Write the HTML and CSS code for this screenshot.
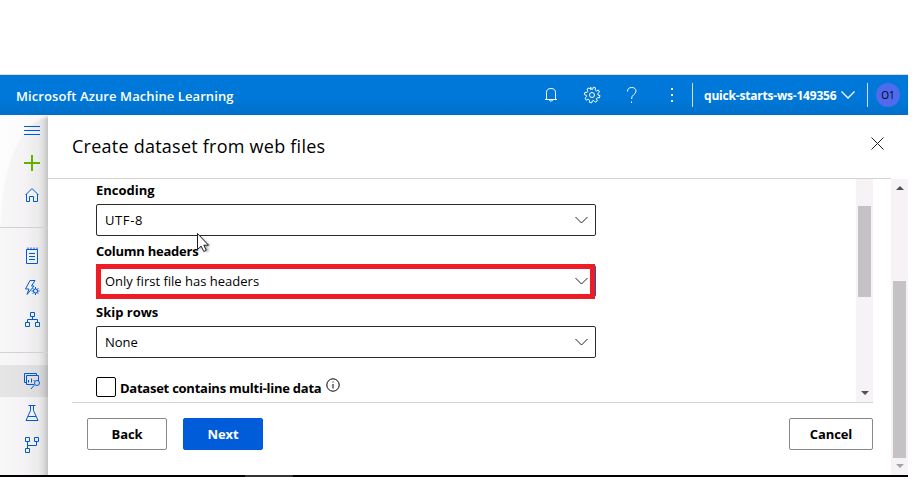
FILE: index.html
```html
<!DOCTYPE html>
<html lang="en">
<head>
<meta charset="utf-8">
<title>Microsoft Azure Machine Learning</title>
<link rel="stylesheet" href="styles.css">
</head>
<body>
<div class="app">
  <header class="topbar">
    <span class="brand">Microsoft Azure Machine Learning</span>
    <svg class="ti bell" width="14" height="18" viewBox="0 0 14 18"><path d="M1 13.500h12M2.500 13V6.500Q2.500 2.500 7 2.500T11.500 6.500V13M5 14q2 2.500 4 0"/></svg>
    <svg class="ti gear" width="18" height="18" viewBox="0 0 18 18"><circle cx="9" cy="9" r="2.500"/><path d="M7.700 1.200l.6 2.100h1.400l.6-2.100 2.300.7-.4 2.100 1.200 1 1.900-1 1.200 2.100-1.700 1.400.2 1.500 2 .5-.5 2.300-2.200-.1-.9 1.200.9 2-2 1.300-1.500-1.600-1.500.3-.6 2-2.300-.6.100-2.100-1.300-.9-1.900.9-1.300-2 1.600-1.500-.3-1.500-2-.6.600-2.300 2.200.1.800-1.200-.9-2 2-1.300 1.500 1.600z"/></svg>
    <svg class="ti help" width="12" height="18" viewBox="0 0 12 18"><path d="M1.500 5.500Q1.500 1.500 5.700 1.500T10 5.200C10 8.500 5.500 8.500 5.500 13M5.500 15.500v1.500"/></svg>
    <svg class="ti dots" width="4" height="18" viewBox="0 0 4 18"><path d="M1 2h2v2H1zM1 8h2v2H1zM1 14h2v2H1z"/></svg>
    <i class="sep"></i>
    <span class="workspace">quick-starts-ws-149356</span>
    <svg class="ti chev" width="14" height="8" viewBox="0 0 14 8"><path d="M.5.500l6.500 6.500L13.500.500"/></svg>
    <i class="sep second"></i>
    <span class="avatar">O1</span>
  </header>
  <div class="main">
    <nav class="rail">
      <div class="group first">
        <a class="item menu"><svg width="16" height="10" viewBox="0 0 16 10"><path d="M0 .5h16M0 4.500h16M0 8.500h16"/></svg></a>
        <a class="item"><svg class="plus" width="16" height="16" viewBox="0 0 16 16"><path d="M0 8h16M8 0v16"/></svg></a>
        <a class="item"><svg width="16" height="16" viewBox="0 0 16 16"><path d="M1.500 8L8 1.500 14.500 8M2.500 7v7.500h3v-5h4v5h4V7"/></svg></a>
      </div>
      <div class="group">
        <a class="item"><svg width="16" height="18" viewBox="0 0 16 18"><path d="M2.500 2.500h11v14h-11zM4 .500v2M7 .500v2M10 .500v2M13 .500v2M5 6.500h6M5 9.500h6M5 12.500h6"/></svg></a>
        <a class="item"><svg width="16" height="18" viewBox="0 0 16 18"><path d="M6 1.500h5L7.500 7H10L3 15.500 5 10H1.500zM11.500 8v8M7.500 12h8M8.700 9.200l5.600 5.600M14.300 9.200l-5.600 5.600"/><circle class="solid" cx="11.500" cy="12" r="2"/></svg></a>
        <a class="item"><svg width="16" height="16" viewBox="0 0 16 16"><path d="M6.500 .5h4v4h-4zM1.500 10.500h4v4h-4zM11.500 10.500h4v4h-4zM8.500 4.500v3M3.500 10V7.500h10V10"/></svg></a>
      </div>
      <div class="group">
        <a class="item active"><svg width="17" height="17" viewBox="0 0 17 17"><path d="M2 9.500H.5V.500h12V2M10 11.500H2.500V2.500h12V8M4.500 7v2.500M7.500 5.500v4M10 7v1M10.500 12L7 16"/><circle cx="13" cy="10" r="2.500"/></svg></a>
        <a class="item"><svg width="16" height="17" viewBox="0 0 16 17"><path d="M4.500 .5h7M6.500 .5v5L2 15.500h12L9.500 5.500v-5M4 11.500h8"/></svg></a>
        <a class="item"><svg width="16" height="17" viewBox="0 0 16 17"><path d="M1.500.5h4v4h-4zM10.500.500h4v4h-4zM1.500 11.500h4v4h-4zM3.500 4.500v7M3.500 8.500h9v-4"/></svg></a>
      </div>
    </nav>
    <section class="panel">
      <div class="panel-head">
        <h1>Create dataset from web files</h1>
        <svg class="close" width="13" height="13" viewBox="0 0 13 13"><path d="M.5.500l12 12M12.500.500l-12 12"/></svg>
      </div>
      <div class="scroll-area">
        <form class="form">
          <label class="label">Encoding</label>
          <div class="select"><span class="code">UTF-8</span><svg width="13" height="8" viewBox="0 0 13 8"><path d="M.5 1l6 6 6-6"/></svg></div>
          <label class="label tight">Column headers</label>
          <div class="select marked"><span>Only first file has headers</span><svg width="13" height="8" viewBox="0 0 13 8"><path d="M.5 1l6 6 6-6"/></svg></div>
          <label class="label">Skip rows</label>
          <div class="select"><span>None</span><svg width="13" height="8" viewBox="0 0 13 8"><path d="M.5 1l6 6 6-6"/></svg></div>
          <div class="check"><i class="box"></i><span class="label tight">Dataset contains multi-line data</span><svg class="info" width="14" height="14" viewBox="0 0 14 14"><circle cx="7" cy="7" r="6.200"/><path d="M7 3.500v1M7 6v4.500"/></svg></div>
        </form>
        <div class="bar inner"><i class="thumb"></i><i class="down"></i></div>
      </div>
      <footer class="actions">
        <button class="btn">Back</button>
        <button class="btn primary">Next</button>
        <button class="btn cancel">Cancel</button>
      </footer>
    </section>
    <div class="bar outer"><i class="up"></i><i class="thumb"></i><i class="down"></i></div>
  </div>
  <div class="taskbar"><i></i></div>
  <svg class="cursor" width="20" height="24" viewBox="0 0 20 24"><path class="shade" d="M3 3v15l4-3 3 5 3-1-2-5h4z"/><path d="M1.500 1.500v16l3.600-3.300 2.700 5.300 2.500-1.200-2.500-5.100h4.700z"/></svg>
</div>
</body>
</html>
```
FILE: styles.css
```css
* { box-sizing: border-box; }
body { margin: 0; background: #fff; font-family: "Open Sans", "Noto Sans", sans-serif; font-size: 13px; color: #000; }
svg { display: block; fill: none; stroke: currentColor; flex: none; }
i { display: block; }
.app { position: relative; width: 908px; padding-top: 74px; }

.topbar { display: flex; align-items: center; height: 41px; padding: 0 8px 0 16px; border-top: 1px solid #d9dce0; background: linear-gradient(#0078d9 60%, #006fc9); color: #fff; white-space: nowrap; font-weight: 600; }
.topbar > * { flex: none; }
.brand { width: 528px; padding-top: 2px; letter-spacing: .09px; }
.gear { margin-left: 25px; }
.help { margin-left: 25px; }
.dots { margin-left: 32px; fill: #fff; stroke: none; }
.sep { width: 1px; height: 24px; margin-left: 18px; background: #d5dce5; }
.workspace { width: 132px; margin-left: 11px; font-size: 12px; font-weight: 700; letter-spacing: -.2px; }
.chev { margin-left: 5px; stroke-width: 1.3; }
.sep.second { margin-left: 12px; }
.avatar { width: 24px; height: 24px; margin-left: 8px; border-radius: 50%; background: #4f6bed; color: #000; font-size: 10px; font-weight: 400; line-height: 24px; text-align: center; }

.main { display: flex; height: 360px; }
.rail { width: 48px; background: radial-gradient(ellipse 50px 110px at 50px 110px, transparent 96%, rgba(255, 255, 255, .7)) 0 0 / 48px 110px no-repeat, linear-gradient(90deg, #f8f7f8, #f5f3f5 50%, #ebebeb 80%, #dedede 90%, #c3c3c3); color: #0058d8; }
.group { height: 125px; padding-top: 12px; border-top: 1px solid #d2d0d2; }
.group.first { height: 112px; padding-top: 0; border: 0; }
.item { display: flex; align-items: center; justify-content: center; height: 32px; padding-left: 16px; }
.menu svg { margin-top: -1px; }
.plus { color: #5db300; stroke-width: 2; }
.solid { fill: #eee; }
.active { background: rgba(0, 0, 0, .07); }

.panel { width: 843px; background: #fff; }
.panel-head { display: flex; justify-content: space-between; height: 64px; padding: 22px 7px 0 24px; border-bottom: 1px solid #d4d4d4; }
h1 { margin: 0; font-size: 18px; font-weight: 400; line-height: 18px; letter-spacing: .24px; white-space: nowrap; }
.close { color: #222; }
.scroll-area { display: flex; justify-content: space-between; height: 224px; margin: 0 18px 0 24px; border-bottom: 1px solid #d4d4d4; }
.form { width: 524px; padding-left: 24px; }
.label { display: block; height: 29px; padding-top: 7px; font-weight: 700; line-height: 16px; white-space: nowrap; }
.label.tight { letter-spacing: -.25px; }
.form > .label:first-child { height: 25px; padding-top: 3px; }
.select { display: flex; align-items: center; justify-content: space-between; height: 32px; padding: 0 7px 0 8px; border: 1px solid #2b2b2b; border-radius: 2px; color: #000; }
.select svg { color: #222; }
.code { letter-spacing: .6px; }
.marked { position: relative; border-color: #0f5faf; }
.marked::after { content: ""; position: absolute; inset: -2px 0 -3px -1px; border: 5px solid #ee1c25; }
.check { display: flex; align-items: flex-start; padding-top: 19px; }
.box { width: 20px; height: 20px; border: 1px solid #000; border-radius: 2px; }
.check .label { width: 202px; height: 20px; margin-left: 4px; padding-top: 3px; }
.info { margin-left: 4px; margin-top: 1px; }
.actions { display: flex; height: 72px; padding: 15px 18px 0 39px; gap: 16px; }
.btn { width: 80px; height: 32px; padding: 0; border: 1px solid #8a8886; border-radius: 2px; background: #fff; color: #000; font: 700 13px "Open Sans", sans-serif; letter-spacing: -.1px; }
.primary { border-color: #015cda; background: #015cda; color: #fff; }
.cancel { width: 84px; margin-left: auto; }

.bar { position: relative; width: 17px; background: #f6f2f6; }
.thumb { width: 13px; margin: 0 2px; background: #c4c2c5; }
.inner { padding-top: 27px; }
.inner .thumb { height: 91px; }
.outer { height: 296px; margin-top: 64px; padding-top: 102px; }
.outer .thumb { height: 177px; }
.up, .down { position: absolute; left: 5px; border: 4px solid transparent; }
.up { top: 3px; border-bottom-color: #505050; }
.down { bottom: 3px; border-top-color: #505050; }
.outer .down { border-top-color: #a3a3a3; }
.taskbar { height: 2px; background: #000; }
.taskbar i { width: 48px; height: 2px; margin-left: 245px; background: #333; }
.cursor { position: absolute; left: 196px; top: 232px; color: #1b1b2b; fill: #fff; }
.shade { fill: rgba(0, 0, 0, .3); stroke: none; filter: blur(1px); }
```
